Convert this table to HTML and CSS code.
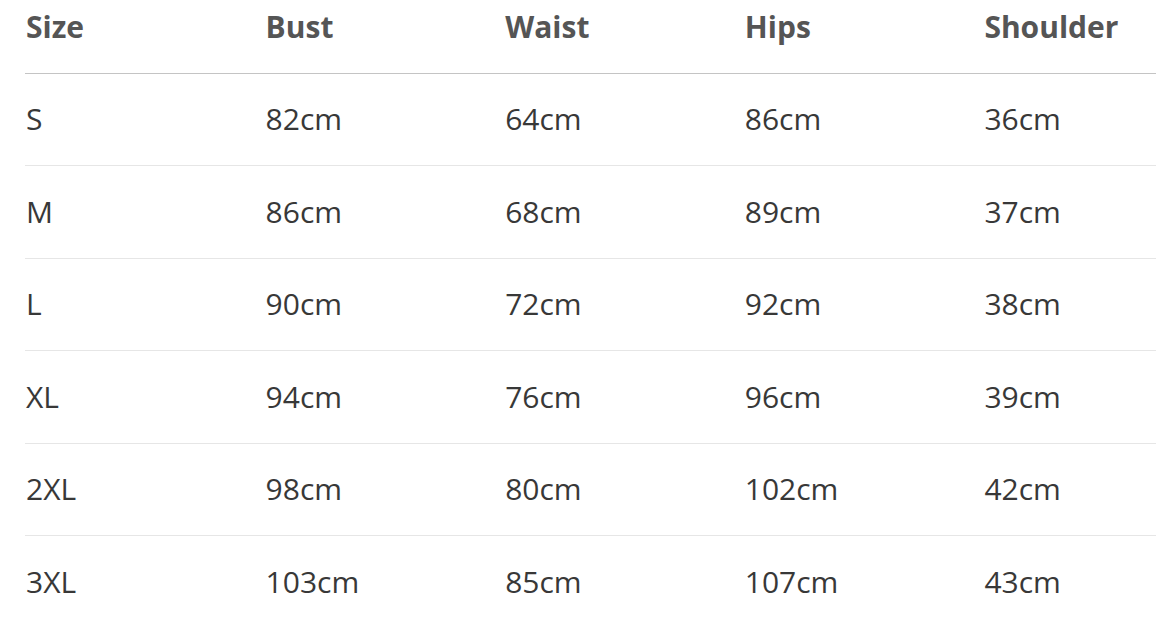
FILE: index.html
```html
<!DOCTYPE html>
<html>
<head>
<meta charset="utf-8">
<link rel="stylesheet" href="styles.css">
</head>
<body>
<div class="wrap">
<table class="size-table">
  <thead>
    <tr><th>Size</th><th>Bust</th><th>Waist</th><th>Hips</th><th>Shoulder</th></tr>
  </thead>
  <tbody>
    <tr><td>S</td><td>82cm</td><td>64cm</td><td>86cm</td><td>36cm</td></tr>
    <tr><td>M</td><td>86cm</td><td>68cm</td><td>89cm</td><td>37cm</td></tr>
    <tr><td>L</td><td>90cm</td><td>72cm</td><td>92cm</td><td>38cm</td></tr>
    <tr><td>XL</td><td>94cm</td><td>76cm</td><td>96cm</td><td>39cm</td></tr>
    <tr><td>2XL</td><td>98cm</td><td>80cm</td><td>102cm</td><td>42cm</td></tr>
    <tr><td>3XL</td><td>103cm</td><td>85cm</td><td>107cm</td><td>43cm</td></tr>
  </tbody>
</table>
</div>
</body>
</html>
```

FILE: styles.css
```css
html, body {
  margin: 0;
  padding: 0;
  background: #ffffff;
  overflow: hidden;
}
.wrap {
  width: 1156px;
  height: 627px;
  overflow: hidden;
  padding-left: 25px;
  box-sizing: border-box;
}
.size-table {
  border-collapse: collapse;
  table-layout: fixed;
  width: 1198px;
  font-family: "Open Sans", "Noto Sans", sans-serif;
  font-size: 30px;
}
.size-table th,
.size-table td {
  width: 239.5px;
  text-align: left;
  padding: 0 0 0 1px;
  white-space: nowrap;
}
.size-table th {
  height: 73px;
  vertical-align: top;
  padding-top: 6px;
  box-sizing: border-box;
  font-weight: 700;
  color: #555555;
  line-height: 42px;
  border-bottom: 1px solid #c4c4c4;
}
.size-table td {
  height: 92.5px;
  box-sizing: border-box;
  color: #383838;
  font-weight: 400;
  line-height: 42px;
  vertical-align: middle;
  border-bottom: 1px solid #e6e6e6;
}
```
